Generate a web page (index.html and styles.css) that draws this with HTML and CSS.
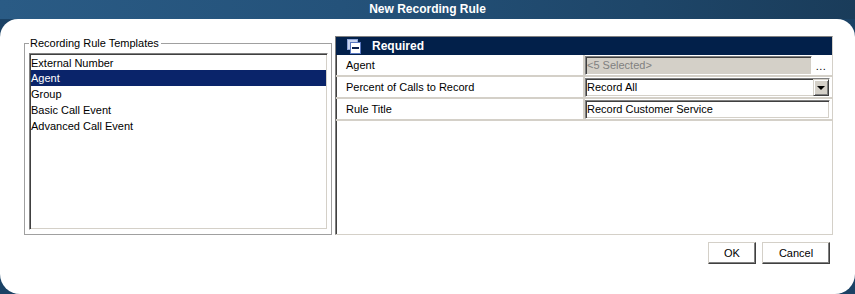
FILE: index.html
```html
<!DOCTYPE html>
<html lang="en">
<head>
    <meta charset="UTF-8">
    <title>New Recording Rule</title>
    <link rel="stylesheet" href="styles.css">
</head>
<body>
    <div class="titlebar">New Recording Rule</div>
    <div class="window">
        <div class="main">
            <fieldset class="group">
                <legend>Recording Rule Templates</legend>
                <ul class="listbox">
                    <li>External Number</li>
                    <li class="selected">Agent</li>
                    <li>Group</li>
                    <li>Basic Call Event</li>
                    <li>Advanced Call Event</li>
                </ul>
            </fieldset>

            <div class="props">
                <div class="props-header">
                    <svg class="collapse-icon" width="14" height="15" viewBox="0 0 14 15">
                        <rect x="0.5" y="0.5" width="10" height="10" fill="#c8d4ee" stroke="#8ea4d8"/>
                        <rect x="3.5" y="3.5" width="10" height="11" fill="#ffffff" stroke="#5a78c0"/>
                        <rect x="5" y="8" width="7" height="2" fill="#0a1e4a"/>
                    </svg>
                    <span>Required</span>
                </div>
                <div class="prop-row">
                    <div class="prop-label">Agent</div>
                    <div class="prop-value">
                        <div class="field disabled">&lt;5 Selected&gt;</div>
                        <span class="ellipsis">...</span>
                    </div>
                </div>
                <div class="prop-row">
                    <div class="prop-label">Percent of Calls to Record</div>
                    <div class="prop-value">
                        <div class="field combo">
                            <span>Record All</span>
                            <span class="drop-btn"><span class="arrow"></span></span>
                        </div>
                    </div>
                </div>
                <div class="prop-row">
                    <div class="prop-label">Rule Title</div>
                    <div class="prop-value">
                        <div class="field">Record Customer Service</div>
                    </div>
                </div>
            </div>
        </div>

        <div class="buttons">
            <button class="btn ok">OK</button>
            <button class="btn cancel">Cancel</button>
        </div>
    </div>
</body>
</html>
```

FILE: styles.css
```css
body {
    margin: 0;
    width: 855px;
    height: 294px;
    overflow: hidden;
    background-color: #1b4265;
    font-family: 'Liberation Sans', Arial, sans-serif;
    font-size: 11px;
    color: #000;
}
.titlebar {
    height: 19px;
    line-height: 19px;
    text-align: center;
    color: white;
    font-weight: bold;
    font-size: 12px;
    background: linear-gradient(90deg, #2a5b85 0%, #24527a 40%, #1e4669 75%, #1a3c5a 100%);
}
.window {
    box-sizing: border-box;
    height: 275px;
    background-color: white;
    border-radius: 18px 18px 20px 20px;
    padding: 17px 22px 0 24px;
}
.main {
    display: flex;
    gap: 3px;
}
.group {
    box-sizing: border-box;
    width: 308px;
    margin: 1px 0 0 0;
    padding: 3px 3px 2px 4px;
    border: 1px solid #a0a0a0;
    min-width: 0;
}
.group legend {
    padding: 0 2px 0 1px;
    margin-left: 0;
    line-height: 13px;
}
.listbox {
    box-sizing: border-box;
    list-style: none;
    margin: 0;
    height: 177px;
    padding: 0 1px;
    border: 1px solid;
    border-color: #808080 #ffffff #ffffff #808080;
    box-shadow: inset 1px 1px #404040, inset -1px -1px #d4d0c8;
}
.listbox li {
    height: 16px;
    line-height: 16px;
    white-space: nowrap;
}
.listbox li:first-child {
    margin-top: 1px;
    height: 15px;
}
.listbox li.selected {
    background-color: #0a246a;
    color: white;
}
.props {
    box-sizing: border-box;
    width: 498px;
    height: 199px;
    border: 1px solid;
    border-color: #808080 #d4d0c8 #d4d0c8 #808080;
    box-shadow: inset 1px 0 #404040;
    background-color: white;
}
.props-header {
    display: flex;
    align-items: center;
    height: 18px;
    background-color: #02204a;
    color: white;
    font-weight: bold;
    font-size: 12px;
}
.collapse-icon {
    margin-left: 11px;
    margin-right: 11px;
}
.prop-row {
    display: flex;
    height: 20px;
    border-bottom: 2px solid #d4d0c8;
}
.prop-label {
    width: 237px;
    padding-left: 10px;
    line-height: 20px;
    border-right: 2px solid #d4d0c8;
}
.prop-value {
    flex: 1;
    display: flex;
    align-items: flex-start;
    padding-top: 1px;
    padding-right: 2px;
}
.field {
    box-sizing: border-box;
    flex: 1;
    height: 19px;
    line-height: 17px;
    padding-left: 1px;
    border: 1px solid;
    border-color: #808080 #ffffff #ffffff #808080;
    box-shadow: inset 1px 1px #404040, inset -1px -1px #d4d0c8;
    background-color: white;
    white-space: nowrap;
}
.field.disabled {
    background-color: #d4d0c8;
    color: #808080;
    flex: none;
    width: 227px;
}
.ellipsis {
    flex: 1;
    text-align: center;
    line-height: 20px;
    letter-spacing: 0.5px;
}
.combo {
    display: flex;
    justify-content: space-between;
}
.drop-btn {
    box-sizing: border-box;
    width: 16px;
    height: 17px;
    background-color: #d4d0c8;
    border: 1px solid;
    border-color: #d4d0c8 #404040 #404040 #d4d0c8;
    box-shadow: inset 1px 1px #fff, inset -1px -1px #808080;
    display: flex;
    align-items: center;
    justify-content: center;
}
.arrow {
    width: 0;
    height: 0;
    border-left: 4px solid transparent;
    border-right: 4px solid transparent;
    border-top: 4px solid #000;
    margin-top: 1px;
}
.buttons {
    display: flex;
    justify-content: flex-end;
    gap: 6px;
    margin-top: 7px;
    margin-right: 3px;
}
.btn {
    box-sizing: border-box;
    height: 22px;
    padding: 0;
    font-family: 'Liberation Sans', Arial, sans-serif;
    font-size: 11px;
    background-color: white;
    border: 1px solid;
    border-color: #d4d0c8 #404040 #404040 #d4d0c8;
    box-shadow: inset -1px -1px #808080;
}
.ok {
    width: 48px;
}
.cancel {
    width: 68px;
}
```
